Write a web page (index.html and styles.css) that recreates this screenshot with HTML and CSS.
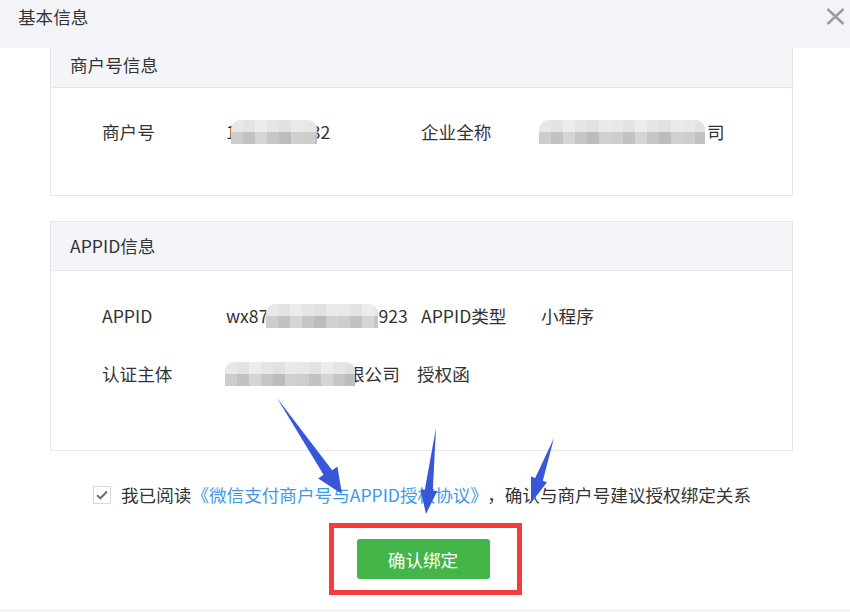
FILE: index.html
```html
<!DOCTYPE html>
<html lang="zh-CN">
<head>
<meta charset="utf-8">
<title>基本信息</title>
<link rel="stylesheet" href="styles.css">
</head>
<body>
<div class="page">
  <header class="topbar">
    <span class="topbar-title">基本信息</span>
    <span class="close" aria-label="关闭">
      <svg width="19" height="17" viewBox="0 0 19 17"><path d="M1.5 1 L17.5 16 M17.5 1 L1.5 16" stroke="#9a9a9a" stroke-width="2.4" fill="none"/></svg>
    </span>
  </header>

  <main class="content">
    <section class="card card-merchant">
      <div class="card-head">商户号信息</div>
      <div class="card-body">
        <div class="row">
          <span class="label">商户号</span>
          <span class="value"><span class="ch">1</span><span class="mosaic m1"></span><span class="ch">32</span></span>
          <span class="label">企业全称</span>
          <span class="value"><span class="mosaic m2"></span>司</span>
        </div>
      </div>
    </section>

    <section class="card card-appid">
      <div class="card-head card-head-tall">APPID信息</div>
      <div class="card-body card-body-tall">
        <div class="row">
          <span class="label">APPID</span>
          <span class="value">wx87<span class="mosaic m3"></span>923</span>
          <span class="label">APPID类型</span>
          <span class="value">小程序</span>
        </div>
        <div class="row">
          <span class="label">认证主体</span>
          <span class="value"><span class="mosaic m4"></span>限公司</span>
          <span class="label label-link">授权函</span>
          <span class="value"></span>
        </div>
      </div>
    </section>

    <div class="agree">
      <span class="checkbox">
        <svg width="12" height="10" viewBox="0 0 12 10"><path d="M1 5.2 L4.4 8.3 L11 1.5" stroke="#6f6f6f" stroke-width="2" fill="none"/></svg>
      </span>
      <span class="agree-text">我已阅读<a class="agree-link">《微信支付商户号与APPID授权协议》</a><span class="agree-tail">，确认与商户号建议授权绑定关系</span></span>
    </div>

    <div class="actions">
      <div class="highlight">
        <button class="btn-primary">确认绑定</button>
      </div>
    </div>
  </main>
  <div class="bottom-strip"></div>

  <svg class="annotations" width="850" height="612" viewBox="0 0 850 612">
    <polygon fill="#3757d8" points="277,398 332.2,470.2 337.4,466.4 342,494 318.2,478.5 323.6,474.8"/>
    <polygon fill="#3757d8" points="436,428 432.8,490.7 437.3,491.1 426,514 420.4,489.3 424.8,489.7"/>
    <polygon fill="#3757d8" points="554,438 542.8,480.7 547.0,482.2 531,503 531.0,476.6 535.2,478.1"/>
  </svg>
</div>
</body>
</html>
```

FILE: styles.css
```css
* { box-sizing: border-box; }

html, body {
  margin: 0;
  padding: 0;
  background: #ffffff;
}

body {
  font-family: "Noto Sans CJK SC", "Microsoft YaHei", sans-serif;
  font-size: 17.6px;
  color: #333333;
}

.page {
  position: relative;
  width: 850px;
  height: 612px;
  overflow: hidden;
}

.topbar {
  height: 48px;
  background: #f3f4f8;
  display: flex;
  align-items: flex-start;
  justify-content: space-between;
  padding: 5px 5px 0 18px;
}

.topbar-title {
  line-height: 24px;
  color: #333;
}

.close {
  display: block;
  margin-top: 3px;
  width: 19px;
  height: 17px;
}

.close svg { display: block; }

.content {
  padding-left: 50px;
}

.card {
  width: 743px;
  border: 1px solid #e6e7eb;
  background: #fff;
}

.card-merchant {
  border-top: none;
}

.card-appid {
  margin-top: 25px;
}

.card-head {
  background: #f4f5f9;
  border-bottom: 1px solid #e6e7eb;
  height: 40px;
  line-height: 34px;
  padding-left: 19px;
}

.card-head-tall {
  height: 49px;
  line-height: 48px;
}

.card-body {
  padding: 32px 0 51px 51px;
  display: flex;
  flex-direction: column;
  gap: 34px;
}

.card-body-tall {
  padding-top: 33px;
  padding-bottom: 64px;
}

.row {
  display: grid;
  grid-template-columns: 124px 195px 120px auto;
  line-height: 24px;
  height: 24px;
  align-items: center;
}

.label, .value {
  white-space: nowrap;
  display: flex;
  align-items: center;
}

.label-link {
  margin-left: -4px;
}

.ch { position: relative; }

.mosaic {
  display: inline-block;
  height: 24px;
  position: relative;
  z-index: 1;
  border-radius: 9px 9px 0 0;
  background:
    linear-gradient(to bottom, rgba(255,255,255,0.55) 0 48%, rgba(255,255,255,0) 48%),
    repeating-linear-gradient(90deg, #cdcdcd 0 12px, #c2c2c2 12px 24px, #d5d5d5 24px 36px, #c6c6c6 36px 48px, #bcbcbc 48px 60px, #d0d0d0 60px 72px);
}

.m1 { width: 86px; margin-left: -5px; margin-right: -6px; }
.m2 { width: 166px; margin-left: -2px; margin-right: 2px; }
.m3 { width: 112px; margin-left: -2px; margin-right: 0; }
.m4 { width: 130px; margin-left: -1px; margin-right: -8px; }

.agree {
  margin-top: 32px;
  padding-left: 43px;
  display: flex;
  align-items: center;
  line-height: 24px;
}

.checkbox {
  width: 18px;
  height: 18px;
  border: 1px solid #d8d8d8;
  background: #fff;
  display: flex;
  align-items: center;
  justify-content: center;
  margin-right: 10px;
}

.checkbox svg { display: block; }

.agree-text {
  white-space: nowrap;
}

.agree-link {
  color: #3d9ae8;
  text-decoration: none;
}

.agree-tail {
  margin-left: 8px;
}

.actions {
  margin-top: 16px;
  padding-right: 50px;
  display: flex;
  justify-content: center;
}

.highlight {
  border: 5px solid #f53b3b;
  padding: 11px 27px 11px 23px;
}

.btn-primary {
  display: block;
  width: 133px;
  height: 40px;
  border: none;
  border-radius: 3px;
  background: #44b549;
  color: #ffffff;
  font-family: inherit;
  font-size: 17.6px;
  padding: 0;
}

.bottom-strip {
  position: absolute;
  left: 0;
  right: 0;
  bottom: 0;
  height: 3px;
  background: #f5f5f7;
}

.annotations {
  position: absolute;
  left: 0;
  top: 0;
  pointer-events: none;
}
```
